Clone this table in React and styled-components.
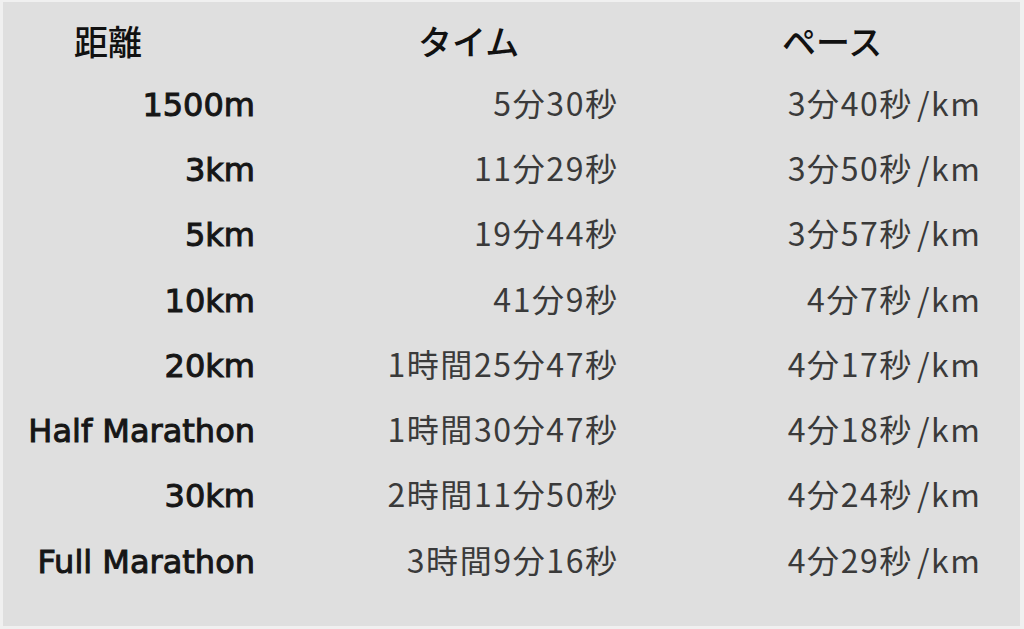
import React from "react";
import styled, { createGlobalStyle } from "styled-components";

const Global = createGlobalStyle`
  html, body { margin: 0; padding: 0; background: #f0f0f0; }
  body { width: 1024px; height: 629px; overflow: hidden; }
`;

const Frame = styled.div`
  box-sizing: border-box;
  margin: 2px 4px 0 3px;
  height: 624px;
  background: #dfdfdf;
  padding-top: 15px;
`;

const Table = styled.div`
  display: grid;
  grid-template-columns: 252px 362px 363px;
  grid-auto-rows: 65.3px;
  grid-template-rows: 52px;
  align-items: center;
`;

const Head = styled.div`
  font-family: "Noto Sans CJK JP", sans-serif;
  font-size: 34px;
  font-weight: 500;
  color: #111;
  padding-left: ${(p) => p.$indent}px;
  padding-bottom: 4px;
  line-height: 1;
`;

const Cell = styled.div`
  text-align: right;
  font-family: ${(p) =>
    p.$latin
      ? `"DejaVu Sans", "Noto Sans CJK JP", sans-serif`
      : `"Noto Sans CJK JP", sans-serif`};
  font-size: 32px;
  font-weight: 400;
  -webkit-text-stroke: ${(p) => (p.$latin ? "1px #161616" : "0")};
  letter-spacing: ${(p) => (p.$latin ? "0" : "1.6px")};
  margin-right: ${(p) => (p.$latin ? "0" : "-1.6px")};
  padding-top: ${(p) => (p.$latin ? 6 : 0)}px;
  color: ${(p) => (p.$latin ? "#161616" : "#3a3a3a")};
  line-height: 1;
  white-space: nowrap;
`;

const Unit = styled.span`
  margin-left: 4px;
`;

const rows = [
  ["1500m", "5分30秒", "3分40秒"],
  ["3km", "11分29秒", "3分50秒"],
  ["5km", "19分44秒", "3分57秒"],
  ["10km", "41分9秒", "4分7秒"],
  ["20km", "1時間25分47秒", "4分17秒"],
  ["Half Marathon", "1時間30分47秒", "4分18秒"],
  ["30km", "2時間11分50秒", "4分24秒"],
  ["Full Marathon", "3時間9分16秒", "4分29秒"],
];

export default function App() {
  return (
    <>
      <Global />
      <Frame>
        <Table>
          <Head $indent={71}>距離</Head>
          <Head $indent={163}>タイム</Head>
          <Head $indent={165}>ペース</Head>
          {rows.map(([d, t, p]) => (
            <React.Fragment key={d}>
              <Cell $latin>{d}</Cell>
              <Cell>{t}</Cell>
              <Cell>
                {p}
                <Unit>/km</Unit>
              </Cell>
            </React.Fragment>
          ))}
        </Table>
      </Frame>
    </>
  );
}
